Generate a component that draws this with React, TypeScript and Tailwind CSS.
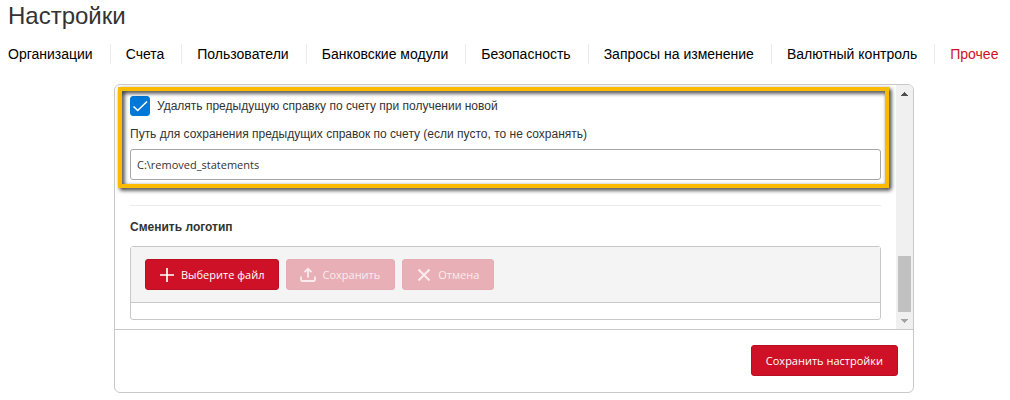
import type { ReactNode } from 'react';

const tabs = [
  'Организации',
  'Счета',
  'Пользователи',
  'Банковские модули',
  'Безопасность',
  'Запросы на изменение',
  'Валютный контроль',
  'Прочее',
];

const activeTab = 'Прочее';

function Tabs() {
  return (
    <nav>
      <ul className="flex whitespace-nowrap text-sm leading-5 text-black">
        {tabs.map((tab) => (
          <li key={tab} className="border-l border-[#ebebeb] pl-[15px] pr-[17px] first:border-l-0 first:pl-0 last:pr-0">
            <a href="#" className={tab === activeTab ? 'text-[#ce1126]' : ''}>
              {tab}
            </a>
          </li>
        ))}
      </ul>
    </nav>
  );
}

function PlusIcon() {
  return (
    <svg width="14" height="14" viewBox="0 0 14 14" fill="none" stroke="currentColor" strokeWidth="1.700">
      <path d="M7 0v14M0 7h14" />
    </svg>
  );
}

function UploadIcon() {
  return (
    <svg
      width="14"
      height="14"
      viewBox="0 0 14 14"
      fill="none"
      stroke="currentColor"
      strokeWidth="1.800"
      className="overflow-visible"
    >
      <path d="M7 9.500V1M3.500 4.200 7 .8l3.500 3.400M0 8.500v3.300a1.200 1.200 0 0 0 1.200 1.200h11.600a1.200 1.200 0 0 0 1.200-1.200V8.500" />
    </svg>
  );
}

function CloseIcon() {
  return (
    <svg width="14" height="14" viewBox="0 0 14 14" fill="none" stroke="currentColor" strokeWidth="2">
      <path d="M1.500 1.500l11 11M12.500 1.500l-11 11" />
    </svg>
  );
}

interface ButtonProps {
  icon?: ReactNode;
  disabled?: boolean;
  children: ReactNode;
}

function Button({ icon, disabled, children }: ButtonProps) {
  return (
    <button
      type="button"
      disabled={disabled}
      className="flex h-[31px] items-center gap-[7px] whitespace-nowrap rounded-[3px] border border-[#b90f22] bg-[#ce1126] px-3.5 font-['Open_Sans','Noto_Sans',sans-serif] text-[11px] font-medium text-white disabled:border-[#e6acb3] disabled:bg-[#e8afb6] disabled:text-[#faecee]"
    >
      {icon}
      {children}
    </button>
  );
}

function Scrollbar() {
  return (
    <div className="flex w-[17px] shrink-0 flex-col items-center bg-[#f0f0f0]" aria-hidden="true">
      <div className="flex h-[17px] items-center">
        <svg width="7" height="4" viewBox="0 0 7 4" fill="#505050" shapeRendering="crispEdges">
          <path d="M3 0h1v1h1v1h1v1h1v1H0V3h1V2h1V1h1z" />
        </svg>
      </div>
      <div className="flex-1" />
      <div className="h-14 w-[13px] bg-[#c1c1c1]" />
      <div className="flex h-[17px] items-center">
        <svg width="7" height="4" viewBox="0 0 7 4" fill="#a3a3a3" shapeRendering="crispEdges">
          <path d="M0 0h7v1H6v1H5v1H4v1H3V3H2V2H1V1H0z" />
        </svg>
      </div>
    </div>
  );
}

function StatementSettings() {
  return (
    <div className="relative">
      <label className="flex items-center gap-[7px]">
        <span className="relative size-5">
          <input
            type="checkbox"
            defaultChecked
            className="peer block size-5 appearance-none rounded-[3px] border border-[#a6a6a6] checked:border-[#0078d7] checked:bg-[#0078d7]"
          />
          <svg
            className="pointer-events-none absolute inset-0 hidden peer-checked:block"
            width="20"
            height="20"
            viewBox="0 0 20 20"
            fill="none"
            stroke="#fff"
            strokeWidth="1.6"
          >
            <path d="M3.500 10.500l4.200 4L17 5.500" />
          </svg>
        </span>
        Удалять предыдущую справку по счету при получении новой
      </label>
      <label htmlFor="path" className="mt-[9px] block">
        Путь для сохранения предыдущих справок по счету (если пусто, то не сохранять)
      </label>
      <input
        id="path"
        type="text"
        defaultValue="C:\removed_statements"
        className="mt-1.5 block h-[31px] w-full rounded-[3px] border border-[#a6a6a6] px-1.5 font-['Open_Sans','Noto_Sans',sans-serif] text-[11px]"
      />
      {/* highlight frame around the statement settings */}
      <div className="pointer-events-none absolute -bottom-2 -left-3 -right-2 -top-[9px] border-4 border-[#fcbb00] drop-shadow-[2px_2px_2px_rgba(0,0,0,0.9)]" />
    </div>
  );
}

function LogoUpload() {
  return (
    <section>
      <h2 className="font-bold">Сменить логотип</h2>
      <div className="mt-2.5 rounded-[3px] border border-[#c8c8c8]">
        <div className="flex gap-[7px] border-b border-[#c8c8c8] bg-[#f4f4f4] px-3.5 py-3">
          <Button icon={<PlusIcon />}>Выберите файл</Button>
          <Button icon={<UploadIcon />} disabled>
            Сохранить
          </Button>
          <Button icon={<CloseIcon />} disabled>
            Отмена
          </Button>
        </div>
        <div className="h-4" />
      </div>
    </section>
  );
}

export default function App() {
  return (
    <div className="bg-white font-['Liberation_Sans',Arial,sans-serif] text-xs leading-[18px] text-[#333]">
      <header className="pl-2">
        <h1 className="mb-3 text-2xl leading-8">Настройки</h1>
        <Tabs />
      </header>
      <main className="mb-[7px] ml-[114px] mr-24 mt-5 overflow-hidden rounded-md border border-[#c8c8c8]">
        <div className="flex">
          <div className="min-w-0 flex-1 px-[15px] pb-[9px] pt-[11px]">
            <StatementSettings />
            <hr className="mb-3 mt-[25px] border-[#ebebeb]" />
            <LogoUpload />
          </div>
          <Scrollbar />
        </div>
        <footer className="flex justify-end border-t border-[#c8c8c8] px-[15px] pb-4 pt-[15px]">
          <Button>Сохранить настройки</Button>
        </footer>
      </main>
    </div>
  );
}
